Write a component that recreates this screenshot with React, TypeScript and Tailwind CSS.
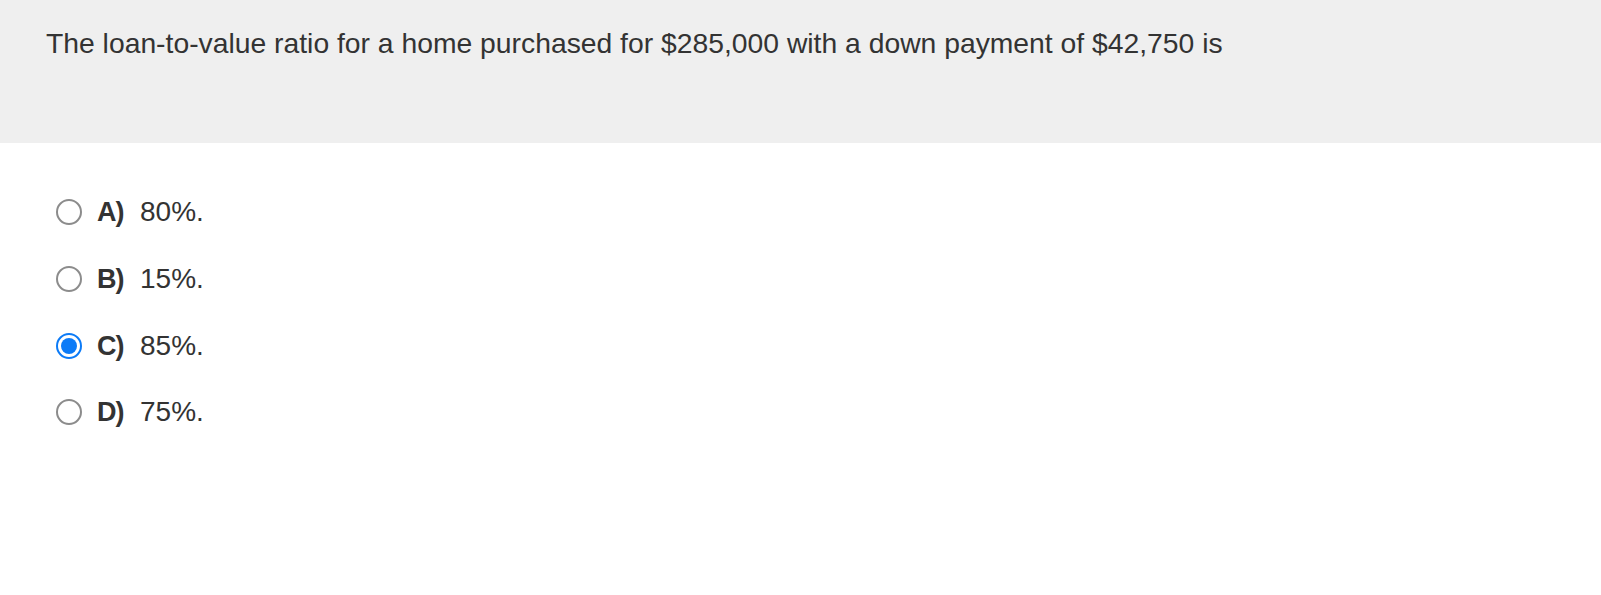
import React from "react";

const options = [
  { label: "A)", text: "80%.", selected: false },
  { label: "B)", text: "15%.", selected: false },
  { label: "C)", text: "85%.", selected: true },
  { label: "D)", text: "75%.", selected: false },
];

function Radio({ selected }: { selected: boolean }) {
  if (selected) {
    return (
      <span className="flex h-[26px] w-[26px] shrink-0 items-center justify-center rounded-full border-[2.5px] border-[#0c7bf7] bg-white">
        <span className="h-[16px] w-[16px] rounded-full bg-[#0c7bf7]" />
      </span>
    );
  }
  return <span className="h-[26px] w-[26px] shrink-0 rounded-full border-2 border-[#8c8c8c] bg-white" />;
}

export default function App() {
  return (
    <div className="min-h-[595px] w-full bg-white text-[#333333]" style={{ fontFamily: '"Liberation Sans", Arial, Helvetica, sans-serif' }}>
      <div className="h-[143px] bg-[#efefef] pl-[46px] pt-[27px]">
        <p className="text-[28.3px] leading-[32px]">
          The loan-to-value ratio for a home purchased for $285,000 with a down payment of $42,750 is
        </p>
      </div>
      <div className="flex flex-col pl-[56px] pt-[36px]">
        {options.map((o) => (
          <div key={o.label} className="flex h-[66.7px] items-center">
            <Radio selected={o.selected} />
            <span className="ml-[15px] w-[43px] text-[27px] font-bold leading-[32px] tracking-[-1px]">{o.label}</span>
            <span className="text-[28px] leading-[32px]">{o.text}</span>
          </div>
        ))}
      </div>
    </div>
  );
}
